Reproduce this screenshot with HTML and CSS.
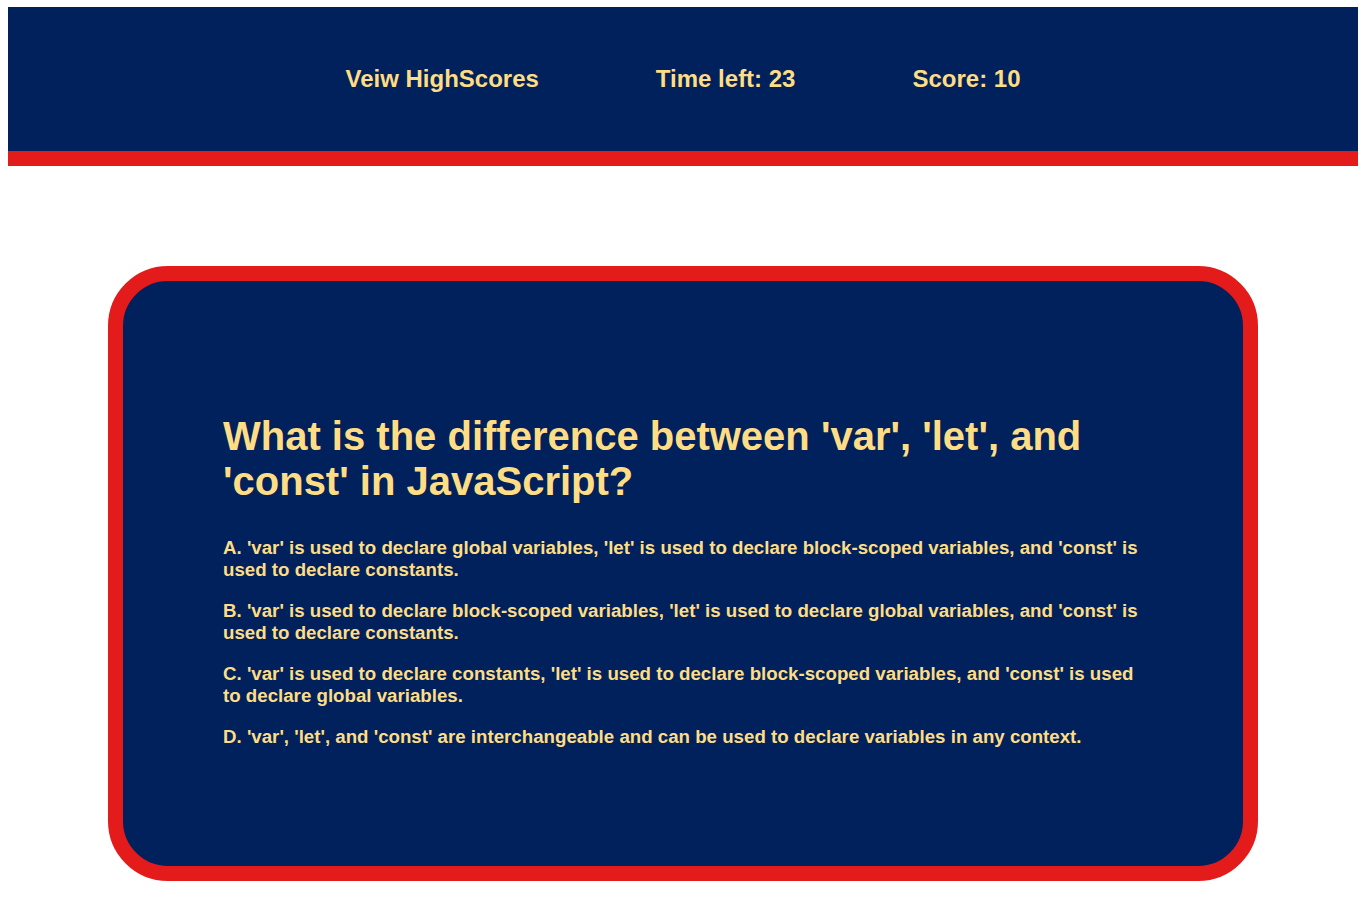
FILE: index.html
```html
<!DOCTYPE html>
<html lang="en">
<head>
<meta charset="utf-8">
<title>Quiz</title>
<link rel="stylesheet" href="styles.css">
</head>
<body>
<header class="topbar">
  <a class="nav-item" href="#">Veiw HighScores</a>
  <span class="nav-item">Time left: 23</span>
  <span class="nav-item">Score: 10</span>
</header>
<main class="card">
  <h2 class="question">What is the difference between 'var', 'let', and 'const' in JavaScript?</h2>
  <p class="option">A. 'var' is used to declare global variables, 'let' is used to declare block-scoped variables, and 'const' is used to declare constants.</p>
  <p class="option">B. 'var' is used to declare block-scoped variables, 'let' is used to declare global variables, and 'const' is used to declare constants.</p>
  <p class="option">C. 'var' is used to declare constants, 'let' is used to declare block-scoped variables, and 'const' is used to declare global variables.</p>
  <p class="option">D. 'var', 'let', and 'const' are interchangeable and can be used to declare variables in any context.</p>
</main>
</body>
</html>
```

FILE: styles.css
```css
body {
  margin: 7px 8px 8px 8px;
  font-family: "Liberation Sans", Arial, sans-serif;
  background: #ffffff;
}

.topbar {
  display: flex;
  justify-content: center;
  align-items: center;
  gap: 117px;
  height: 144px;
  background: #00215b;
  border-bottom: 15px solid #e31b1b;
}

.nav-item {
  color: #ffdd85;
  font-size: 24px;
  font-weight: bold;
  text-decoration: none;
}

.card {
  margin: 100px 100px 0 100px;
  padding: 100px 100px 99px 100px;
  background: #00215b;
  border: 15px solid #e31b1b;
  border-radius: 60px;
  color: #ffdd85;
}

.question {
  font-size: 40px;
  font-weight: bold;
  margin: 33.2px 0;
}

.option {
  font-size: 18.7px;
  line-height: 22px;
  font-weight: bold;
  margin: 19px 0;
}
```
